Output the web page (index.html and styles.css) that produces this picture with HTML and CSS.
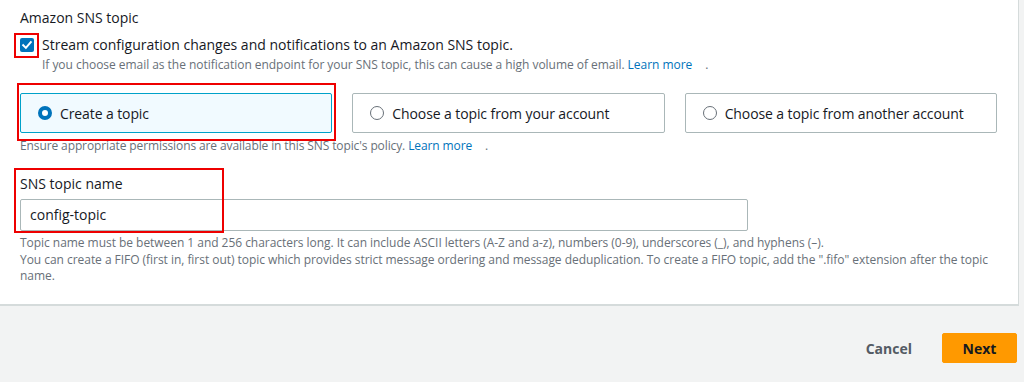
FILE: index.html
```html
<!DOCTYPE html>
<html lang="en">
<head>
<meta charset="utf-8">
<title>Amazon SNS topic</title>
<link rel="stylesheet" href="styles.css">
</head>
<body>
<div class="page">
  <section class="panel">
    <div class="field-label">Amazon SNS topic</div>
    <label class="check-row">
      <span class="checkbox">
        <svg width="14" height="14" viewBox="0 0 14 14"><rect x="0" y="0" width="14" height="14" rx="2" fill="#0073bb"/><path d="M3.2 7.2 L5.9 9.9 L10.8 4.2" fill="none" stroke="#fff" stroke-width="2" stroke-linecap="square"/></svg>
      </span>
      <span class="check-text">Stream configuration changes and notifications to an Amazon SNS topic.</span>
    </label>
    <div class="check-desc">If you choose email as the notification endpoint for your SNS topic, this can cause a high volume of email. <a class="link">Learn more</a><span class="ext"></span>.</div>

    <div class="tiles">
      <div class="tile selected">
        <span class="radio on"></span><span class="tile-text">Create a topic</span>
      </div>
      <div class="tile">
        <span class="radio"></span><span class="tile-text">Choose a topic from your account</span>
      </div>
      <div class="tile">
        <span class="radio"></span><span class="tile-text">Choose a topic from another account</span>
      </div>
    </div>
    <div class="desc">Ensure appropriate permissions are available in this SNS topic's policy. <a class="link">Learn more</a><span class="ext"></span>.</div>

    <div class="field-label name-label">SNS topic name</div>
    <div class="input">config-topic</div>
    <div class="help">Topic name must be between 1 and 256 characters long. It can include ASCII letters (A-Z and a-z), numbers (0-9), underscores (_), and hyphens (–).<br>You can create a FIFO (first in, first out) topic which provides strict message ordering and message deduplication. To create a FIFO topic, add the ".fifo" extension after the topic name.</div>

    <div class="mark mark-check"></div>
    <div class="mark mark-tile"></div>
    <div class="mark mark-name"></div>
  </section>
  <footer class="actions">
    <button class="btn-link">Cancel</button>
    <button class="btn-primary">Next</button>
  </footer>
</div>
</body>
</html>
```
FILE: styles.css
```css
* { box-sizing: border-box; }
html, body {
  margin: 0;
  padding: 0;
  background: #f2f3f3;
  font-family: "Open Sans", "Noto Sans", sans-serif;
  color: #16191f;
}
.page {
  width: 1024px;
  height: 382px;
  overflow: hidden;
}
.panel {
  position: relative;
  width: 1019px;
  height: 306px;
  background: #fff;
  border-right: 1px solid #d5dbdb;
  border-bottom: 2px solid #d5dbdb;
  padding: 8px 10px 0 20px;
}
.field-label {
  font-size: 14px;
  line-height: 20px;
}
.check-row {
  display: flex;
  align-items: center;
  margin-top: 7px;
  height: 20px;
}
.checkbox {
  width: 14px;
  height: 14px;
  display: flex;
  margin-right: 8px;
}
.check-text {
  font-size: 14px;
  line-height: 20px;
}
.check-desc {
  margin: 2px 0 0 22px;
  font-size: 12px;
  line-height: 16px;
  color: #687078;
  letter-spacing: -0.04px;
}
.link {
  color: #0073bb;
  text-decoration: none;
}
.ext {
  display: inline-block;
  width: 13px;
}
.tiles {
  display: flex;
  gap: 20px;
  margin-top: 20px;
  width: 977px;
}
.tile {
  flex: 1;
  height: 40px;
  border: 1px solid #aab7b8;
  border-radius: 2px;
  display: flex;
  align-items: center;
  padding-left: 17px;
}
.tile.selected {
  background: #f1faff;
  border-color: #00a1c9;
}
.radio {
  width: 14px;
  height: 14px;
  border-radius: 50%;
  border: 1px solid #687078;
  margin-right: 8px;
  flex: none;
}
.radio.on {
  border: 4px solid #0073bb;
  background: #fff;
}
.tile-text {
  font-size: 14px;
  letter-spacing: -0.1px;
}
.desc {
  margin-top: 5px;
  font-size: 12px;
  line-height: 16px;
  color: #687078;
  letter-spacing: -0.11px;
}
.name-label {
  margin-top: 20px;
}
.input {
  margin-top: 5px;
  width: 728px;
  height: 32px;
  border: 1px solid #aab7b8;
  border-radius: 2px;
  padding-left: 9px;
  font-size: 14px;
  line-height: 30px;
}
.help {
  margin-top: 4px;
  font-size: 12px;
  line-height: 16.5px;
  color: #687078;
  letter-spacing: -0.04px;
  max-width: 985px;
}
.mark {
  position: absolute;
  border: 2px solid #e00;
  pointer-events: none;
}
.mark-check { left: 14px; top: 33px; width: 25px; height: 25px; }
.mark-tile { left: 17px; top: 83px; width: 319px; height: 58px; }
.mark-name { left: 14px; top: 168px; width: 210px; height: 65px; }
.actions {
  display: flex;
  justify-content: flex-end;
  align-items: center;
  gap: 12px;
  padding: 27px 7px 0 0;
}
.btn-link {
  background: none;
  border: none;
  font-family: inherit;
  font-size: 14px;
  font-weight: 700;
  color: #545b64;
  padding: 0 18px 0 20px;
  height: 30px;
}
.btn-primary {
  background: #ff9900;
  border: 1px solid #ff9900;
  border-radius: 2px;
  font-family: inherit;
  font-size: 14px;
  font-weight: 700;
  color: #16191f;
  width: 75px;
  height: 30px;
  padding: 0;
}
```
